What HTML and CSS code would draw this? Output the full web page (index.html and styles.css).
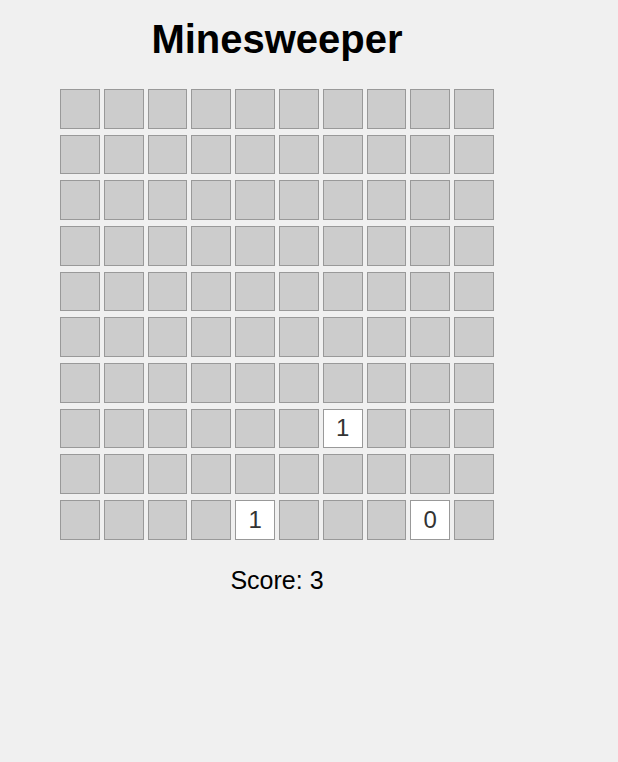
FILE: index.html
```html
<!DOCTYPE html>
<html>
<head>
<meta charset="utf-8">
<title>Minesweeper</title>
<link rel="stylesheet" href="styles.css">
</head>
<body>
<div class="game">
  <h1 class="title">Minesweeper</h1>
  <div class="board">
    <div class="cell"></div><div class="cell"></div><div class="cell"></div><div class="cell"></div><div class="cell"></div><div class="cell"></div><div class="cell"></div><div class="cell"></div><div class="cell"></div><div class="cell"></div>
    <div class="cell"></div><div class="cell"></div><div class="cell"></div><div class="cell"></div><div class="cell"></div><div class="cell"></div><div class="cell"></div><div class="cell"></div><div class="cell"></div><div class="cell"></div>
    <div class="cell"></div><div class="cell"></div><div class="cell"></div><div class="cell"></div><div class="cell"></div><div class="cell"></div><div class="cell"></div><div class="cell"></div><div class="cell"></div><div class="cell"></div>
    <div class="cell"></div><div class="cell"></div><div class="cell"></div><div class="cell"></div><div class="cell"></div><div class="cell"></div><div class="cell"></div><div class="cell"></div><div class="cell"></div><div class="cell"></div>
    <div class="cell"></div><div class="cell"></div><div class="cell"></div><div class="cell"></div><div class="cell"></div><div class="cell"></div><div class="cell"></div><div class="cell"></div><div class="cell"></div><div class="cell"></div>
    <div class="cell"></div><div class="cell"></div><div class="cell"></div><div class="cell"></div><div class="cell"></div><div class="cell"></div><div class="cell"></div><div class="cell"></div><div class="cell"></div><div class="cell"></div>
    <div class="cell"></div><div class="cell"></div><div class="cell"></div><div class="cell"></div><div class="cell"></div><div class="cell"></div><div class="cell"></div><div class="cell"></div><div class="cell"></div><div class="cell"></div>
    <div class="cell"></div><div class="cell"></div><div class="cell"></div><div class="cell"></div><div class="cell"></div><div class="cell"></div><div class="cell revealed">1</div><div class="cell"></div><div class="cell"></div><div class="cell"></div>
    <div class="cell"></div><div class="cell"></div><div class="cell"></div><div class="cell"></div><div class="cell"></div><div class="cell"></div><div class="cell"></div><div class="cell"></div><div class="cell"></div><div class="cell"></div>
    <div class="cell"></div><div class="cell"></div><div class="cell"></div><div class="cell"></div><div class="cell revealed">1</div><div class="cell"></div><div class="cell"></div><div class="cell"></div><div class="cell revealed">0</div><div class="cell"></div>
  </div>
  <div class="score">Score: 3</div>
</div>
</body>
</html>
```

FILE: styles.css
```css
html, body {
  margin: 0;
  padding: 0;
  background: #f0f0f0;
}
body {
  font-family: "Liberation Sans", Arial, sans-serif;
  color: #000;
}
.game {
  width: 434px;
  margin-left: 60px;
  padding-top: 16px;
  text-align: center;
}
.title {
  margin: 0 0 27px 0;
  font-size: 40px;
  font-weight: bold;
  line-height: 46px;
}
.board {
  display: grid;
  grid-template-columns: repeat(10, 1fr);
  grid-template-rows: repeat(10, 41.67px);
  column-gap: 4px;
  row-gap: 4px;
  align-items: start;
}
.cell {
  box-sizing: border-box;
  height: 39.8px;
  background: #cccccc;
  border: 1px solid #999999;
  display: flex;
  align-items: center;
  justify-content: center;
  font-size: 24px;
  color: #333333;
}
.cell.revealed {
  background: #ffffff;
}
.score {
  margin-top: 24px;
  font-size: 25px;
  line-height: 28px;
}
```
